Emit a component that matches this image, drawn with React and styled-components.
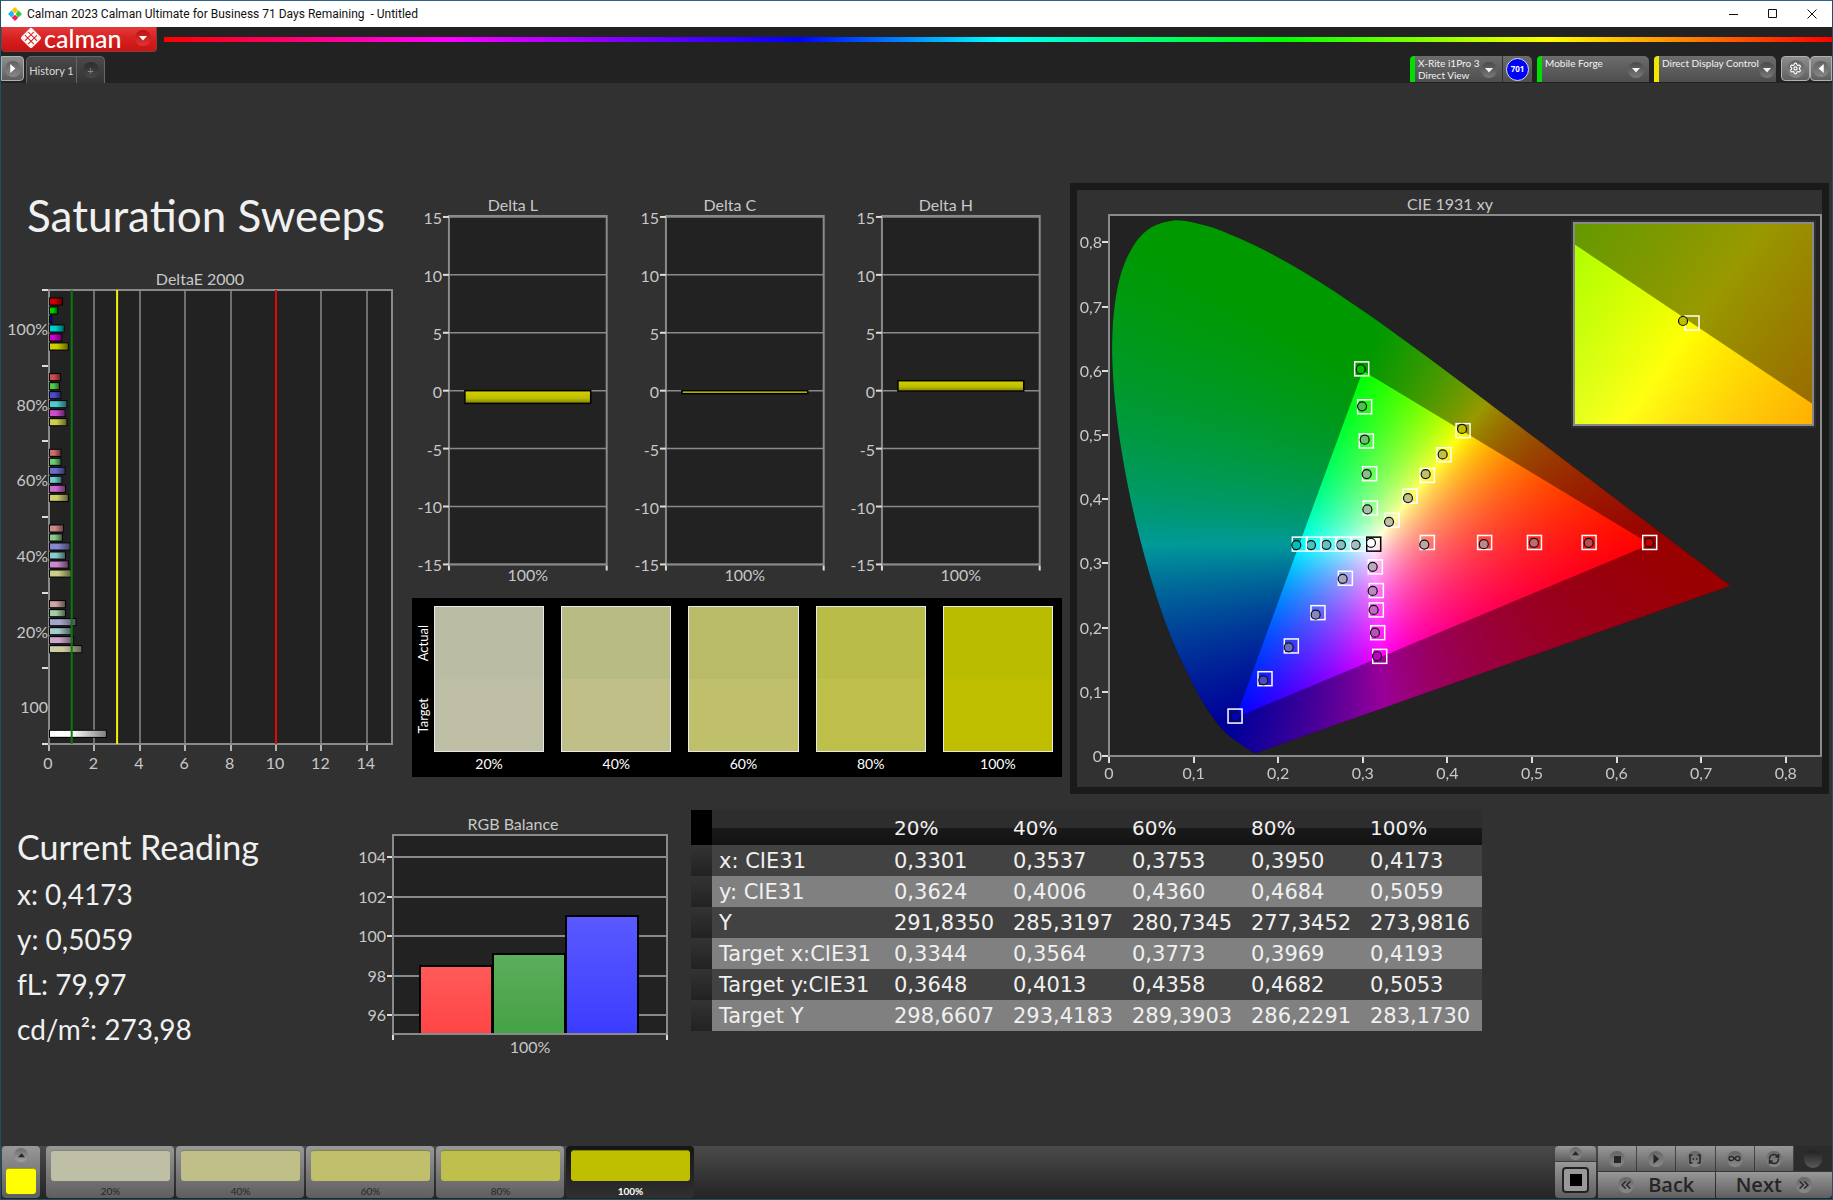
import React, { useEffect, useRef, useState } from 'react';
import styled, { createGlobalStyle, css } from 'styled-components';
import { Infinity as Loop, RefreshCw, Settings, ChevronsLeft, ChevronsRight } from 'lucide-react';

const GlobalStyle = createGlobalStyle`
  * {
    box-sizing: border-box;
  }

  body {
    margin: 0;
    background: #313131;
    color: #f0f0f0;
    font-family: Lato, "Open Sans", sans-serif;
  }

  button {
    font: inherit;
    color: inherit;
    border: 0;
    padding: 0;
    margin: 0;
    cursor: pointer;
  }
`;

// ---------- Data ----------

const LEVELS = ['20%', '40%', '60%', '80%', '100%'];

const SWATCHES = [
  { label: '20%', actual: '#babca4', target: '#bfbfa5' },
  { label: '40%', actual: '#b9bb85', target: '#bfbf87' },
  { label: '60%', actual: '#b9bb68', target: '#bfbf6c' },
  { label: '80%', actual: '#b9bc47', target: '#bfbf4c' },
  { label: '100%', actual: '#babc00', target: '#bfbf00' },
];

const TABLE_ROWS = [
  ['x: CIE31', '0,3301', '0,3537', '0,3753', '0,3950', '0,4173'],
  ['y: CIE31', '0,3624', '0,4006', '0,4360', '0,4684', '0,5059'],
  ['Y', '291,8350', '285,3197', '280,7345', '277,3452', '273,9816'],
  ['Target x:CIE31', '0,3344', '0,3564', '0,3773', '0,3969', '0,4193'],
  ['Target y:CIE31', '0,3648', '0,4013', '0,4358', '0,4682', '0,5053'],
  ['Target Y', '298,6607', '293,4183', '289,3903', '286,2291', '283,1730'],
];

const READINGS = ['x: 0,4173', 'y: 0,5059', 'fL: 79,97', 'cd/m²: 273,98'];

// DeltaE per group: red, green, blue, cyan, magenta, yellow
const DELTA_E = [
  { label: '100%', low: 0, values: [0.57, 0.36, 0.1, 0.64, 0.54, 0.82] },
  { label: '80%', low: 76, values: [0.49, 0.44, 0.5, 0.76, 0.68, 0.76] },
  { label: '60%', low: 108, values: [0.5, 0.5, 0.68, 0.54, 0.7, 0.82] },
  { label: '40%', low: 135, values: [0.62, 0.56, 0.9, 0.7, 0.82, 0.95] },
  { label: '20%', low: 165, values: [0.7, 0.7, 1.16, 0.95, 1.06, 1.42] },
];

const DELTA_CHARTS = [
  { title: 'Delta L', value: -1.1 },
  { title: 'Delta C', value: -0.25 },
  { title: 'Delta H', value: 0.9 },
];

const LOCUS = [
  [0.1741, 0.005], [0.1714, 0.0051], [0.1689, 0.0069], [0.1644, 0.0109], [0.1566, 0.0177],
  [0.144, 0.0297], [0.1355, 0.0399], [0.1241, 0.0578], [0.1096, 0.0868], [0.0913, 0.1327],
  [0.0687, 0.2007], [0.0454, 0.295], [0.0235, 0.4127], [0.0082, 0.5384], [0.0039, 0.6548],
  [0.0139, 0.7502], [0.0389, 0.812], [0.0743, 0.8338], [0.1142, 0.8262], [0.1547, 0.8059],
  [0.1929, 0.7816], [0.2296, 0.7543], [0.2658, 0.7243], [0.3016, 0.6923], [0.3373, 0.6589],
  [0.3731, 0.6245], [0.4087, 0.5896], [0.4441, 0.5547], [0.4788, 0.5202], [0.5125, 0.4866],
  [0.5448, 0.4544], [0.5752, 0.4242], [0.627, 0.3725], [0.6658, 0.334], [0.6915, 0.3083],
  [0.719, 0.2809], [0.7347, 0.2653],
];

const GAMUT = [[0.64, 0.33], [0.3, 0.6], [0.15, 0.06]];

// [target x, target y, measured x, measured y], 20% to 100%
const SWEEPS = [
  {
    hue: [1, 0, 0],
    points: [
      [0.3763, 0.3326, 0.3727, 0.3294],
      [0.444, 0.3326, 0.443, 0.33],
      [0.5029, 0.3326, 0.5023, 0.332],
      [0.5675, 0.3326, 0.567, 0.332],
      [0.6391, 0.3326, 0.6386, 0.3325],
    ],
  },
  {
    hue: [0, 1, 0],
    points: [
      [0.3089, 0.3861, 0.3054, 0.384],
      [0.3081, 0.4397, 0.3046, 0.4392],
      [0.3042, 0.4906, 0.3022, 0.4927],
      [0.3022, 0.544, 0.2991, 0.5447],
      [0.2987, 0.603, 0.2975, 0.6024],
    ],
  },
  {
    hue: [0, 0, 1],
    points: [
      [0.2794, 0.2769, 0.2762, 0.2759],
      [0.247, 0.2233, 0.2443, 0.2202],
      [0.2155, 0.1714, 0.2124, 0.1693],
      [0.1844, 0.1204, 0.1824, 0.1178],
      [0.149, 0.0622, 0.1497, 0.0616],
    ],
  },
  {
    hue: [0, 1, 1],
    points: [
      [0.2951, 0.33, 0.2915, 0.3289],
      [0.2774, 0.33, 0.2742, 0.3289],
      [0.2597, 0.33, 0.2569, 0.3289],
      [0.2423, 0.33, 0.2388, 0.3285],
      [0.225, 0.33, 0.2214, 0.3285],
    ],
  },
  {
    hue: [1, 0, 1],
    points: [
      [0.3148, 0.2946, 0.3117, 0.2946],
      [0.316, 0.2577, 0.3117, 0.2571],
      [0.316, 0.2275, 0.3128, 0.2275],
      [0.3176, 0.1921, 0.3144, 0.1921],
      [0.32, 0.1552, 0.3168, 0.1557],
    ],
  },
  {
    hue: [1, 1, 0],
    points: [
      [0.3345, 0.3674, 0.331, 0.3648],
      [0.3558, 0.4048, 0.3534, 0.4017],
      [0.3763, 0.4371, 0.3743, 0.4392],
      [0.396, 0.4693, 0.3944, 0.4698],
      [0.4185, 0.5068, 0.4173, 0.5094],
    ],
  },
];

const SWEEP_LOWS = [165, 135, 108, 76, 0];
const HUES = [[1, 0, 0], [0, 1, 0], [0, 0, 1], [0, 1, 1], [1, 0, 1], [1, 1, 0]];

const tint = (hue, low, high = 191) => `rgb(${hue.map((on) => (on ? high : low)).join(',')})`;

// ---------- Window frame ----------

const Window = styled.div`
  display: flex;
  flex-direction: column;
  min-height: 100vh;
  border: 1px solid #1f5068;
  border-top-color: #2f6189;
  border-right-color: #2b4a6a;
  background: #313131;
`;

const TitleBar = styled.header`
  display: flex;
  align-items: center;
  gap: 5px;
  height: 26px;
  padding: 0 12px 0 7px;
  background: #fff;
  color: #111;
  font: 12px/26px Roboto, "Open Sans", sans-serif;
`;

const TitleText = styled.span`
  flex: 1;
  white-space: pre;
`;

const WindowButton = styled.button`
  display: flex;
  align-items: center;
  justify-content: center;
  width: 16px;
  height: 26px;
  margin-left: 18px;
  background: none;
`;

const BrandRow = styled.div`
  display: flex;
  align-items: flex-start;
  gap: 7px;
  height: 29px;
  background: #222;
`;

const BrandButton = styled.button`
  display: flex;
  align-items: center;
  width: 156px;
  height: 25px;
  padding: 0 5px 2px 18px;
  border: 1px solid #8c3a3a;
  border-top: 0;
  border-radius: 0 0 4px 4px;
  background: linear-gradient(#e23b3b, #d81f1f 50%, #c81414);
  color: #fff;
`;

const BrandName = styled.span`
  flex: 1;
  padding-left: 2px;
  text-align: left;
  font: 500 25px/22px Lato, sans-serif;
`;

const Spectrum = styled.div`
  flex: 1;
  height: 5px;
  margin-top: 10px;
  background: linear-gradient(90deg, #f00, #f0f 17%, #00f 38%, #0ff 50%, #0f0 67%, #ff0 83%, #f00);
`;

const TabRow = styled.nav`
  display: flex;
  justify-content: space-between;
  height: 27px;
  background: #222;
`;

const TabGroup = styled.div`
  display: flex;
  align-items: flex-start;
  gap: ${(p) => p.$gap || 0}px;
`;

const EdgeButton = styled.button`
  display: flex;
  align-items: center;
  justify-content: center;
  width: ${(p) => p.$width}px;
  height: 25px;
  border: 1px solid #b0b0b0;
  border-radius: ${(p) => (p.$side === 'left' ? '0 4px 4px 0' : p.$side === 'right' ? '4px 0 0 4px' : '4px')};
  background: linear-gradient(#8e8e8e, #5f5f5f);
  color: #fff;
`;

const Dimple = styled.span`
  display: inline-flex;
  align-items: center;
  justify-content: center;
  flex: none;
  width: ${(p) => p.$size || 16}px;
  height: ${(p) => p.$size || 16}px;
  border-radius: 50%;
  background: ${(p) => (p.$red ? 'linear-gradient(#c01010, #dd3535)' : 'linear-gradient(rgba(0,0,0,.28), rgba(255,255,255,.22))')};
`;

const HistoryTabs = styled.div`
  display: flex;
  height: 27px;
  margin-left: 2px;
  border: 1px solid #666;
  border-bottom: 0;
  border-radius: 5px 5px 0 0;
  background: linear-gradient(#4a4a4a, #333);
`;

const HistoryTab = styled.button`
  width: ${(p) => p.$width}px;
  background: none;
  color: #d8d8d8;
  font-size: 11px;
  white-space: nowrap;
`;

const AddTab = styled(HistoryTab)`
  display: flex;
  align-items: center;
  justify-content: center;
  border-left: 1px solid #666;
  color: #8a8a8a;

  ${Dimple} {
    background: linear-gradient(#2c2c2c, #484848);
  }
`;

const Device = styled.div`
  display: flex;
  width: ${(p) => p.$width}px;
  height: 26px;
  border-left: 5px solid ${(p) => p.$status};
  border-radius: 4px 5px 0 0;
  background: linear-gradient(#6c6c6c, #4e4e4e);
  overflow: hidden;
`;

const DeviceButton = styled.button`
  display: flex;
  flex: 1;
  align-items: flex-start;
  justify-content: space-between;
  padding: 1px 5px 0 3px;
  background: none;
  color: #f2f2f2;
  font-size: 10px;
  line-height: 12px;
  text-align: left;
  white-space: pre;

  ${Dimple} {
    margin-top: 5px;
  }
`;

const MeterBadge = styled.span`
  display: flex;
  align-items: center;
  justify-content: center;
  width: 30px;
  border-left: 1px solid #333;

  span {
    display: flex;
    align-items: center;
    justify-content: center;
    width: 23px;
    height: 23px;
    border: 1px solid #ddd;
    border-radius: 50%;
    background: #00f;
    color: #fff;
    font: 700 8px/8px "Open Sans", sans-serif;
  }
`;

// ---------- Workspace ----------

const Workspace = styled.main`
  flex: 1;
  padding: 100px 3px 16px 0;
`;

const TopRow = styled.section`
  display: grid;
  grid-template-columns: 411fr 658fr 759fr;
  align-items: start;
`;

const BottomRow = styled.section`
  display: grid;
  grid-template-columns: 352fr 338fr 791fr 347fr;
  align-items: start;
  margin-top: 16px;
`;

const PageTitle = styled.h1`
  margin: 0 0 18px;
  padding-left: 26px;
  font-size: 44px;
  font-weight: 400;
  line-height: 64px;
  white-space: nowrap;
`;

const MiddleColumn = styled.div`
  padding: 7px 8px 0 0;
`;

const DeltaCharts = styled.div`
  display: grid;
  grid-template-columns: repeat(3, 1fr);
`;

const Chart = styled.svg`
  display: block;
  width: 100%;
  height: auto;
  font-family: Lato, sans-serif;
  font-size: 16px;
  fill: #c8c8c8;
`;

const SwatchPanel = styled.div`
  display: flex;
  margin-top: 9px;
  padding: 8px 9px 0 0;
  height: 179px;
  background: #000;
  color: #fff;
`;

const SwatchSide = styled.div`
  display: grid;
  grid-template-rows: 1fr 1fr;
  justify-items: center;
  align-items: center;
  width: 22px;
  height: 146px;
`;

const SideLabel = styled.span`
  font-size: 13px;
  line-height: 18px;
  writing-mode: vertical-rl;
  transform: rotate(180deg);
`;

const SwatchList = styled.div`
  display: grid;
  flex: 1;
  grid-template-columns: repeat(5, 1fr);
  gap: 17px;
`;

const SwatchItem = styled.div`
  text-align: center;
  font-size: 14px;
  line-height: 24px;
`;

const SwatchColor = styled.div`
  height: 146px;
  border: 1px solid #e8e8e8;
  background: linear-gradient(${(p) => p.$actual} 50%, ${(p) => p.$target} 50%);
`;

const CiePanel = styled.div`
  border: 7px solid #1a1a1a;
`;

const Canvas = styled.canvas`
  display: block;
  width: 100%;
  height: 100%;
`;

const Reading = styled.div`
  padding: 12px 0 0 16px;
`;

const ReadingTitle = styled.h2`
  margin: 0;
  font-size: 34px;
  font-weight: 400;
  line-height: 50px;
`;

const ReadingLine = styled.p`
  margin: 0;
  font-size: 28px;
  line-height: 45px;
`;

const DataTable = styled.table`
  width: 100%;
  table-layout: fixed;
  border-collapse: collapse;
  font: 21px/30px "DejaVu Sans", sans-serif;

  th,
  td {
    height: 31px;
    padding: 0 0 0 7px;
    text-align: left;
    font-weight: 400;
    white-space: nowrap;
  }

  thead th {
    height: 35px;
    font-size: 20px;
    background: linear-gradient(#2d2d2d 50%, #1a1a1a 50%, #121212);
  }

  thead th:first-child {
    background: #000;
  }
`;

const TableRow = styled.tr`
  background: ${(p) => (p.$light ? '#808080' : '#424242')};

  td:first-child {
    background: linear-gradient(#333, #222);
  }
`;

// ---------- Footer ----------

const Footer = styled.footer`
  display: flex;
  justify-content: space-between;
  height: 53px;
  padding-left: 1px;
  background: linear-gradient(#4a4a4a, #242424);
`;

const PatternStrip = styled.div`
  display: flex;
  gap: 2px;
`;

const footerFace = css`
  background: linear-gradient(#989898, #5e5e5e);
  color: #262626;
`;

const CurrentPattern = styled.button`
  ${footerFace}
  display: flex;
  flex-direction: column;
  align-items: center;
  justify-content: space-between;
  width: 38px;
  height: 52px;
  margin-right: 4px;
  padding: 2px 4px 4px;
  border-radius: 4px;
`;

const CurrentColor = styled.span`
  width: 30px;
  height: 26px;
  border-radius: 3px;
  background: #ff0;
  border-top: 1px solid #a0a020;
`;

const PatternButton = styled.button`
  ${footerFace}
  width: 128px;
  height: 52px;
  padding: 4px 4px 0 5px;
  border-radius: 4px;
  font-size: 10px;
  line-height: 20px;

  ${(p) =>
    p.$active &&
    css`
      background: linear-gradient(#151515, #303030);
      color: #fff;
      font-weight: 700;
    `}
`;

const PatternColor = styled.span`
  display: block;
  height: 31px;
  border-radius: 3px;
  border-top: 1px solid rgba(0, 0, 0, 0.3);
  background: ${(p) => p.$color};
`;

const Transport = styled.div`
  display: flex;
  gap: 2px;
`;

const StopColumn = styled.div`
  display: grid;
  grid-template-rows: 15px 36px;
  gap: 1px;
  width: 41px;
`;

const FooterButton = styled.button`
  ${footerFace}
  display: flex;
  align-items: center;
  justify-content: center;
  gap: 14px;
  border-radius: ${(p) => p.$radius || 0};
  font: 600 20px/26px "Open Sans", sans-serif;
  ${(p) => p.$blank && 'background: #2c2c2c;'}
`;

const StopFrame = styled.span`
  display: flex;
  align-items: center;
  justify-content: center;
  width: 27px;
  height: 26px;
  border: 2px solid #222;
  border-radius: 4px;
  background: #999;

  &::before {
    content: '';
    width: 12px;
    height: 12px;
    background: #000;
  }
`;

const TransportGrid = styled.div`
  display: grid;
  grid-template-rows: 25px 26px;
  gap: 1px;
`;

const TransportRow = styled.div`
  display: grid;
  grid-template-columns: repeat(${(p) => p.$columns}, 1fr);
  gap: 1px;
  width: 234px;
`;

// ---------- Icons ----------

const AppIcon = () => (
  <svg width="14" height="14" viewBox="0 0 14 14" aria-hidden="true">
    <path d="M7 0l3.300 3.300L7 6.600 3.700 3.300z" fill="#ffc400" />
    <path d="M3.400 3.600L6.800 7l-3.400 3.400L0 7z" fill="#20b8f0" />
    <path d="M10.600 3.600L14 7l-3.400 3.400L7.200 7z" fill="#28d040" />
    <path d="M7 7.400l3.300 3.300L7 14l-3.300-3.300z" fill="#f02060" />
    <path d="M7 5.500L8.500 7 7 8.500 5.500 7z" fill="#fff" />
  </svg>
);

const CalmanLogo = () => (
  <svg width="22" height="22" viewBox="0 0 22 22" aria-hidden="true">
    <g transform="rotate(45 11 11)">
      <rect x="4" y="4" width="14" height="14" rx="1.5" fill="none" stroke="#fff" strokeWidth="1.5" />
      {[0, 1, 2].map((r) =>
        [0, 1, 2].map((c) => (
          <rect key={`${r}${c}`} x={4.6 + c * 4.6} y={4.6 + r * 4.6} width="3.6" height="3.6" fill="#fff" />
        ))
      )}
    </g>
  </svg>
);

const Triangle = ({ dir = 'down', size = 8 }) => {
  const turn = { down: 0, left: 90, up: 180, right: 270 }[dir];
  return (
    <svg width={size} height={size} viewBox="0 0 8 8" fill="currentColor" aria-hidden="true">
      <path d="M0 2h8L4 6.5z" transform={`rotate(${turn} 4 4)`} />
    </svg>
  );
};

const StopIcon = () => (
  <svg width="8" height="8" viewBox="0 0 8 8" aria-hidden="true">
    <rect x="1" y="1" width="7" height="7" fill="#262626" />
  </svg>
);

const RangeIcon = () => (
  <svg width="12" height="10" viewBox="0 0 12 10" fill="none" stroke="#262626" strokeWidth="1.6" aria-hidden="true">
    <path d="M3.5 1H1v8h2.500M8.500 1H11v8H8.500M3.500 5h1.600M6.900 5h1.600" />
  </svg>
);

// ---------- Charts ----------

const DeltaEChart = () => {
  const left = 48;
  const top = 25;
  const width = 343;
  const height = 454;
  const unit = 22.7;
  const slot = height / 6;
  const x = (v) => left + v * unit;
  const bar = (key, row, index, value, fill) => {
    const y = top + row * slot + 7.5 + index * 9;
    return (
      <g key={key}>
        <rect x={left} y={y} width={value * unit + 1} height="8" fill="#000" />
        <rect x={left + 1} y={y + 1} width={Math.max(value * unit - 1, 1)} height="6" fill={fill} />
        <rect x={left + 1} y={y + 1} width={Math.max(value * unit - 1, 1)} height="6" fill="url(#barShade)" />
      </g>
    );
  };

  return (
    <Chart viewBox="0 0 411 521" role="img" aria-label="DeltaE 2000">
      <defs>
        <linearGradient id="barShade">
          <stop offset="0.4" stopColor="#000" stopOpacity="0" />
          <stop offset="1" stopColor="#000" stopOpacity="0.5" />
        </linearGradient>
      </defs>
      <text x="199" y="20" textAnchor="middle">DeltaE 2000</text>
      <rect x={left} y={top} width={width} height={height} fill="#222" stroke="#8a8a8a" strokeWidth="2" />
      {[2, 4, 6, 8, 10, 12, 14].map((v) => (
        <path key={v} d={`M${Math.round(x(v))} ${top}v${height}`} stroke="#8a8a8a" strokeWidth="1.5" />
      ))}
      {[0, 2, 4, 6, 8, 10, 12, 14].map((v) => (
        <g key={v}>
          <path d={`M${Math.round(x(v))} ${top + height + 1}v6`} stroke="#ddd" strokeWidth="1.5" />
          <text x={x(v) - 1} y={top + height + 25} textAnchor="middle">{v}</text>
        </g>
      ))}
      {[0, 1, 2, 3, 4, 5, 6].map((i) => (
        <path key={i} d={`M${left - 7} ${Math.round(top + i * slot)}h6`} stroke="#ddd" strokeWidth="2" />
      ))}
      {[...DELTA_E.map((g) => g.label), '100'].map((label, i) => (
        <text key={label} x={left - 1} y={top + slot * (i + 0.5) + 7} textAnchor="end">{label}</text>
      ))}
      {DELTA_E.map((group, row) =>
        group.values.map((v, i) => bar(`${row}-${i}`, row, i, v, tint(HUES[i], group.low, 205)))
      )}
      {bar('white', 5, 6, 2.5, '#fff')}
      <path d={`M${x(1)} ${top}v${height}`} stroke="#0b7a0b" strokeWidth="2" />
      <path d={`M${x(3)} ${top}v${height}`} stroke="#f4f400" strokeWidth="2" />
      <path d={`M${x(10)} ${top}v${height}`} stroke="#e00808" strokeWidth="2" />
    </Chart>
  );
};

const DeltaChart = ({ title, value }) => {
  const zero = 201;
  const unit = 11.57;
  const y = (v) => Math.round(zero - v * unit);
  const barTop = value > 0 ? y(value) : zero;
  const barHeight = Math.max(Math.abs(value) * unit, 3);

  return (
    <Chart viewBox="0 0 217 400" role="img" aria-label={title}>
      <defs>
        <linearGradient id="yellowBar" x2="0" y2="1">
          <stop offset="0" stopColor="#d2d200" />
          <stop offset="0.6" stopColor="#bdbd00" />
          <stop offset="1" stopColor="#7d7d00" />
        </linearGradient>
      </defs>
      <text x="101" y="21" textAnchor="middle">{title}</text>
      <rect x="37" y="26" width="158" height="349" fill="#222" stroke="#8a8a8a" strokeWidth="2" />
      {[15, 10, 5, 0, -5, -10, -15].map((v) => (
        <g key={v}>
          <path d={`M37 ${y(v)}h158`} stroke="#8a8a8a" strokeWidth="1.5" />
          <path d={`M31 ${y(v)}h6`} stroke="#ddd" strokeWidth="2" />
          <text x="30" y={y(v) + 7} textAnchor="end">{v}</text>
        </g>
      ))}
      <path d="M37 376v5M195 376v5" stroke="#ddd" strokeWidth="2" />
      <rect x="53" y={barTop} width="126" height={barHeight} fill="url(#yellowBar)" stroke="#000" strokeWidth="1.5" />
      <text x="116" y="392" textAnchor="middle">100%</text>
    </Chart>
  );
};

const RgbBalance = () => {
  const base = 224;
  const y = (v) => Math.round(base - (v - 95.05) * 19.75);
  const bars = [
    { x: 67, value: 98.5, from: '#ff5a5a', to: '#ff4545' },
    { x: 140, value: 99.1, from: '#5cad5c', to: '#45a245' },
    { x: 213, value: 101, from: '#5a5aff', to: '#3c3cff' },
  ];

  return (
    <Chart viewBox="0 0 338 248" role="img" aria-label="RGB Balance">
      <text x="160" y="20" textAnchor="middle">RGB Balance</text>
      <rect x="40" y="25" width="274" height="199" fill="#222" />
      {[104, 102, 100, 98, 96].map((v) => (
        <g key={v}>
          <path d={`M40 ${y(v)}h274`} stroke="#8a8a8a" strokeWidth="2" />
          <path d={`M34 ${y(v)}h6`} stroke="#ddd" strokeWidth="2" />
          <text x="33" y={y(v) + 6} textAnchor="end">{v}</text>
        </g>
      ))}
      {bars.map((b) => (
        <g key={b.x}>
          <linearGradient id={`rgb${b.x}`} x2="0" y2="1">
            <stop offset="0" stopColor={b.from} />
            <stop offset="1" stopColor={b.to} />
          </linearGradient>
          <rect x={b.x} y={y(b.value)} width="72" height={base - y(b.value)} fill={`url(#rgb${b.x})`} stroke="#000" strokeWidth="2" />
        </g>
      ))}
      <rect x="40" y="25" width="274" height="199" fill="none" stroke="#8a8a8a" strokeWidth="2" />
      <path d="M40 225v5M314 225v5" stroke="#ddd" strokeWidth="2" />
      <text x="177" y="243" textAnchor="middle">100%</text>
    </Chart>
  );
};

// Fills the spectral locus with its chromaticity colours, dimmed outside the gamut triangle
const Chromaticity = ({ width, height, x0, x1, y0, y1 }) => {
  const ref = useRef(null);

  useEffect(() => {
    const ctx = ref.current.getContext('2d');
    const px = (x) => ((x - x0) / (x1 - x0)) * width;
    const py = (y) => height - ((y - y0) / (y1 - y0)) * height;

    const layer = document.createElement('canvas');
    layer.width = width;
    layer.height = height;
    const layerCtx = layer.getContext('2d');
    const image = layerCtx.createImageData(width, height);
    for (let j = 0; j < height; j++) {
      const y = y1 - ((j + 0.5) / height) * (y1 - y0);
      for (let i = 0; i < width; i++) {
        const x = x0 + ((i + 0.5) / width) * (x1 - x0);
        const z = 1 - x - y;
        const r = Math.max(0, 3.2406 * x - 1.5372 * y - 0.4986 * z);
        const g = Math.max(0, -0.9689 * x + 1.8758 * y + 0.0415 * z);
        const b = Math.max(0, 0.0557 * x - 0.204 * y + 1.057 * z);
        const top = Math.max(r, g, b) || 1;
        const o = (j * width + i) * 4;
        image.data[o] = (r / top) * 255;
        image.data[o + 1] = (g / top) * 255;
        image.data[o + 2] = (b / top) * 255;
        image.data[o + 3] = 255;
      }
    }
    layerCtx.putImageData(image, 0, 0);

    ctx.clearRect(0, 0, width, height);
    ctx.save();
    ctx.beginPath();
    ctx.moveTo(px(LOCUS[0][0]), py(LOCUS[0][1]));
    // Catmull-Rom through every sample of the locus
    for (let i = 0; i < LOCUS.length - 1; i++) {
      const p0 = LOCUS[Math.max(i - 1, 0)];
      const p1 = LOCUS[i];
      const p2 = LOCUS[i + 1];
      const p3 = LOCUS[Math.min(i + 2, LOCUS.length - 1)];
      ctx.bezierCurveTo(
        px(p1[0] + (p2[0] - p0[0]) / 6),
        py(p1[1] + (p2[1] - p0[1]) / 6),
        px(p2[0] - (p3[0] - p1[0]) / 6),
        py(p2[1] - (p3[1] - p1[1]) / 6),
        px(p2[0]),
        py(p2[1])
      );
    }
    ctx.closePath();
    ctx.clip();
    ctx.fillRect(0, 0, width, height);
    ctx.globalAlpha = 0.6;
    ctx.drawImage(layer, 0, 0);
    ctx.globalAlpha = 1;
    ctx.beginPath();
    GAMUT.forEach(([x, y]) => ctx.lineTo(px(x), py(y)));
    ctx.closePath();
    ctx.clip();
    ctx.drawImage(layer, 0, 0);
    ctx.restore();
  }, [width, height, x0, x1, y0, y1]);

  return <Canvas ref={ref} width={width} height={height} />;
};

const CieChart = () => {
  const left = 32;
  const top = 25;
  const width = 712;
  const height = 541;
  const x = (v) => left + v * 846;
  const y = (v) => top + height - v * 642;
  const ticks = [0, 0.1, 0.2, 0.3, 0.4, 0.5, 0.6, 0.7, 0.8];
  const label = (v) => String(v).replace('.', ',');

  return (
    <Chart viewBox="0 0 745 597" role="img" aria-label="CIE 1931 xy">
      <text x="373" y="20" textAnchor="middle">CIE 1931 xy</text>
      <rect x={left} y={top} width={width} height={height} fill="#222" stroke="#8a8a8a" strokeWidth="2" />
      <foreignObject x={left} y={top} width={width} height={height}>
        <Chromaticity width={width} height={height} x0={0} x1={width / 846} y0={0} y1={height / 642} />
      </foreignObject>
      {ticks.map((v) => (
        <g key={v}>
          <path d={`M${Math.round(x(v))} ${top + height + 1}v6`} stroke="#ddd" strokeWidth="2" />
          <text x={x(v)} y={top + height + 23} textAnchor="middle">{label(v)}</text>
          <path d={`M${left - 7} ${Math.round(y(v))}h6`} stroke="#ddd" strokeWidth="2" />
          <text x={left - 7} y={y(v) + 6} textAnchor="end">{label(v)}</text>
        </g>
      ))}
      {SWEEPS.map(({ hue, points }) =>
        points.map(([tx, ty, mx, my], i) => (
          <g key={`${hue}${i}`}>
            <rect x={x(tx) - 7} y={y(ty) - 7} width="14" height="14" fill="none" stroke="#fff" strokeWidth="1.5" />
            <circle cx={x(mx)} cy={y(my)} r="4.5" fill={tint(hue, SWEEP_LOWS[i])} stroke="#111" strokeWidth="1.2" />
          </g>
        ))
      )}
      <rect x={x(0.3129) - 7} y={y(0.33) - 7} width="14" height="14" fill="none" stroke="#000" strokeWidth="1.5" />
      <circle cx={x(0.3097)} cy={y(0.332)} r="4.5" fill="#fff" stroke="#111" strokeWidth="1.2" />

      <rect x="494" y="30" width="245" height="208" fill="#2e2e2e" />
      <foreignObject x="497" y="33" width="239" height="202">
        <Chromaticity width={239} height={202} x0={0.3915} x1={0.4471} y0={0.4775} y1={0.5331} />
      </foreignObject>
      <rect x="497" y="33" width="239" height="202" fill="none" stroke="#8a8a8a" strokeWidth="2" />
      <rect x="608" y="126" width="14" height="14" fill="none" stroke="#fff" strokeWidth="1.5" />
      <circle cx="606" cy="131" r="4.5" fill="#bfbf00" stroke="#111" strokeWidth="1.2" />
    </Chart>
  );
};

// ---------- App ----------

const TopBars = () => (
  <>
    <TitleBar>
      <AppIcon />
      <TitleText>Calman 2023 Calman Ultimate for Business 71 Days Remaining  - Untitled</TitleText>
      <WindowButton aria-label="Minimize">
        <svg width="10" height="10" stroke="#111"><path d="M0 5.5h9" /></svg>
      </WindowButton>
      <WindowButton aria-label="Maximize">
        <svg width="10" height="10" fill="none" stroke="#111"><path d="M.5.5h8v8h-8z" /></svg>
      </WindowButton>
      <WindowButton aria-label="Close">
        <svg width="10" height="10" stroke="#111"><path d="M.5.5l9 9m0-9l-9 9" /></svg>
      </WindowButton>
    </TitleBar>
    <BrandRow>
      <BrandButton aria-haspopup="menu">
        <CalmanLogo />
        <BrandName>calman</BrandName>
        <Dimple $red><Triangle /></Dimple>
      </BrandButton>
      <Spectrum />
    </BrandRow>
    <TabRow>
      <TabGroup>
        <EdgeButton $width={23} $side="left" aria-label="Show panel">
          <Dimple><Triangle dir="right" size={9} /></Dimple>
        </EdgeButton>
        <HistoryTabs>
          <HistoryTab $width={49}>History 1</HistoryTab>
          <AddTab $width={28} aria-label="Add tab"><Dimple>+</Dimple></AddTab>
        </HistoryTabs>
      </TabGroup>
      <TabGroup $gap={5}>
        <Device $width={122} $status="#00e000">
          <DeviceButton aria-haspopup="menu">
            {'X-Rite i1Pro 3\nDirect View'}
            <Dimple><Triangle /></Dimple>
          </DeviceButton>
          <MeterBadge><span>701</span></MeterBadge>
        </Device>
        <Device $width={112} $status="#00e000">
          <DeviceButton aria-haspopup="menu">
            Mobile Forge
            <Dimple><Triangle /></Dimple>
          </DeviceButton>
        </Device>
        <Device $width={122} $status="#f0e800">
          <DeviceButton aria-haspopup="menu">
            Direct Display Control
            <Dimple><Triangle /></Dimple>
          </DeviceButton>
        </Device>
        <TabGroup>
          <EdgeButton $width={29} aria-label="Settings"><Dimple $size={18}><Settings size={13} /></Dimple></EdgeButton>
          <EdgeButton $width={22} $side="right" aria-label="Hide panel">
            <Dimple><Triangle dir="left" size={9} /></Dimple>
          </EdgeButton>
        </TabGroup>
      </TabGroup>
    </TabRow>
  </>
);

const BottomBar = ({ level, onLevel }) => (
  <Footer>
    <PatternStrip>
      <CurrentPattern aria-label="Current pattern">
        <Dimple $size={14}><Triangle dir="up" size={7} /></Dimple>
        <CurrentColor />
      </CurrentPattern>
      {SWATCHES.map((s) => (
        <PatternButton key={s.label} $active={s.label === level} onClick={() => onLevel(s.label)}>
          <PatternColor $color={s.target} />
          {s.label}
        </PatternButton>
      ))}
    </PatternStrip>
    <Transport>
      <StopColumn>
        <FooterButton $radius="4px 4px 0 0" aria-label="Expand">
          <Dimple $size={13}><Triangle dir="up" size={7} /></Dimple>
        </FooterButton>
        <FooterButton $radius="0 0 4px 4px" aria-label="Stop pattern"><StopFrame /></FooterButton>
      </StopColumn>
      <TransportGrid>
        <TransportRow $columns={6}>
          <FooterButton aria-label="Stop"><Dimple><StopIcon /></Dimple></FooterButton>
          <FooterButton aria-label="Play"><Dimple><Triangle dir="right" size={10} /></Dimple></FooterButton>
          <FooterButton aria-label="Read series"><Dimple><RangeIcon /></Dimple></FooterButton>
          <FooterButton aria-label="Continuous"><Dimple><Loop size={13} strokeWidth={2.5} /></Dimple></FooterButton>
          <FooterButton aria-label="Refresh"><Dimple><RefreshCw size={12} strokeWidth={3} /></Dimple></FooterButton>
          <FooterButton $blank aria-label="Record"><Dimple $size={18} /></FooterButton>
        </TransportRow>
        <TransportRow $columns={2}>
          <FooterButton><Dimple><ChevronsLeft size={16} /></Dimple>Back</FooterButton>
          <FooterButton $radius="0 0 4px 0">Next<Dimple><ChevronsRight size={16} /></Dimple></FooterButton>
        </TransportRow>
      </TransportGrid>
    </Transport>
  </Footer>
);

const App = () => {
  const [level, setLevel] = useState('100%');

  return (
    <>
      <GlobalStyle />
      <Window>
        <TopBars />
        <Workspace>
          <TopRow>
            <div>
              <PageTitle>Saturation Sweeps</PageTitle>
              <DeltaEChart />
            </div>
            <MiddleColumn>
              <DeltaCharts>
                {DELTA_CHARTS.map((c) => (
                  <DeltaChart key={c.title} title={c.title} value={c.value} />
                ))}
              </DeltaCharts>
              <SwatchPanel>
                <SwatchSide>
                  <SideLabel>Actual</SideLabel>
                  <SideLabel>Target</SideLabel>
                </SwatchSide>
                <SwatchList>
                  {SWATCHES.map((s) => (
                    <SwatchItem key={s.label}>
                      <SwatchColor $actual={s.actual} $target={s.target} />
                      {s.label}
                    </SwatchItem>
                  ))}
                </SwatchList>
              </SwatchPanel>
            </MiddleColumn>
            <CiePanel>
              <CieChart />
            </CiePanel>
          </TopRow>
          <BottomRow>
            <Reading>
              <ReadingTitle>Current Reading</ReadingTitle>
              {READINGS.map((line) => (
                <ReadingLine key={line}>{line}</ReadingLine>
              ))}
            </Reading>
            <RgbBalance />
            <DataTable>
              <colgroup>
                <col width="21" />
                <col width="175" />
                {LEVELS.map((l) => (
                  <col key={l} width="119" />
                ))}
              </colgroup>
              <thead>
                <tr>
                  <th />
                  <th />
                  {LEVELS.map((l) => (
                    <th key={l} scope="col">{l}</th>
                  ))}
                </tr>
              </thead>
              <tbody>
                {TABLE_ROWS.map(([name, ...values], i) => (
                  <TableRow key={name} $light={i % 2 === 1}>
                    <td />
                    <th scope="row">{name}</th>
                    {values.map((v) => (
                      <td key={v}>{v}</td>
                    ))}
                  </TableRow>
                ))}
              </tbody>
            </DataTable>
          </BottomRow>
        </Workspace>
        <BottomBar level={level} onLevel={setLevel} />
      </Window>
    </>
  );
};

export default App;
